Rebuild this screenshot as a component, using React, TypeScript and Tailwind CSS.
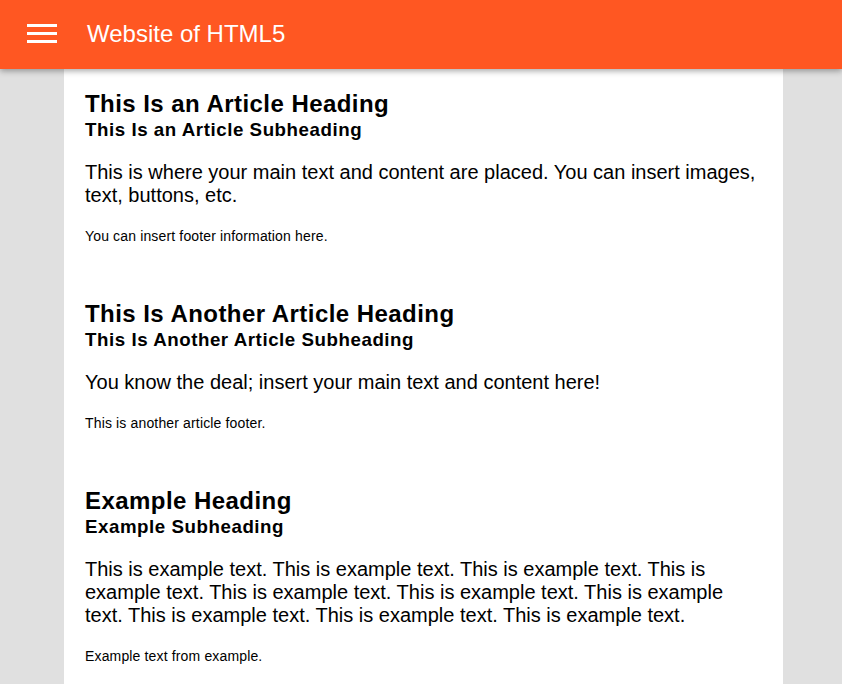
import React from "react";

const articles = [
  {
    heading: "This Is an Article Heading",
    sub: "This Is an Article Subheading",
    body: "This is where your main text and content are placed. You can insert images, text, buttons, etc.",
    footer: "You can insert footer information here.",
  },
  {
    heading: "This Is Another Article Heading",
    sub: "This Is Another Article Subheading",
    body: "You know the deal; insert your main text and content here!",
    footer: "This is another article footer.",
  },
  {
    heading: "Example Heading",
    sub: "Example Subheading",
    body: "This is example text. This is example text. This is example text. This is example text. This is example text. This is example text. This is example text. This is example text. This is example text. This is example text.",
    footer: "Example text from example.",
  },
];

export default function App() {
  return (
    <div className="min-h-[684px] bg-[#e0e0e0] text-black font-['Liberation_Sans',Arial,sans-serif]">
      <header className="relative z-10 h-[69px] bg-[#ff5722] flex items-start pt-[24px] shadow-[0_2px_6px_rgba(0,0,0,0.35)]">
        <button className="ml-[27px] w-[30px] flex flex-col gap-[5px]" aria-label="menu">
          <span className="block h-[3px] bg-white" />
          <span className="block h-[3px] bg-white" />
          <span className="block h-[3px] bg-white" />
        </button>
        <h1 className="ml-[30px] -mt-[4px] text-[24px] text-white leading-[28px]">Website of HTML5</h1>
      </header>
      <main className="ml-[64px] w-[719px] bg-white px-[21px] pt-[21px] pb-[20px]">
        {articles.map((a, i) => (
          <article key={i} className="pb-[36px]">
            <h2 className="text-[24px] font-bold leading-[28px] tracking-[0.45px]">{a.heading}</h2>
            <h3 className="text-[18.72px] font-bold leading-[22px] tracking-[0.55px] mt-[1px]">{a.sub}</h3>
            <p className="text-[20px] leading-[23px] mt-[20px]">{a.body}</p>
            <footer className="text-[14px] leading-[16px] tracking-[0.15px] mt-[21px] mb-[20px]">{a.footer}</footer>
          </article>
        ))}
      </main>
    </div>
  );
}
